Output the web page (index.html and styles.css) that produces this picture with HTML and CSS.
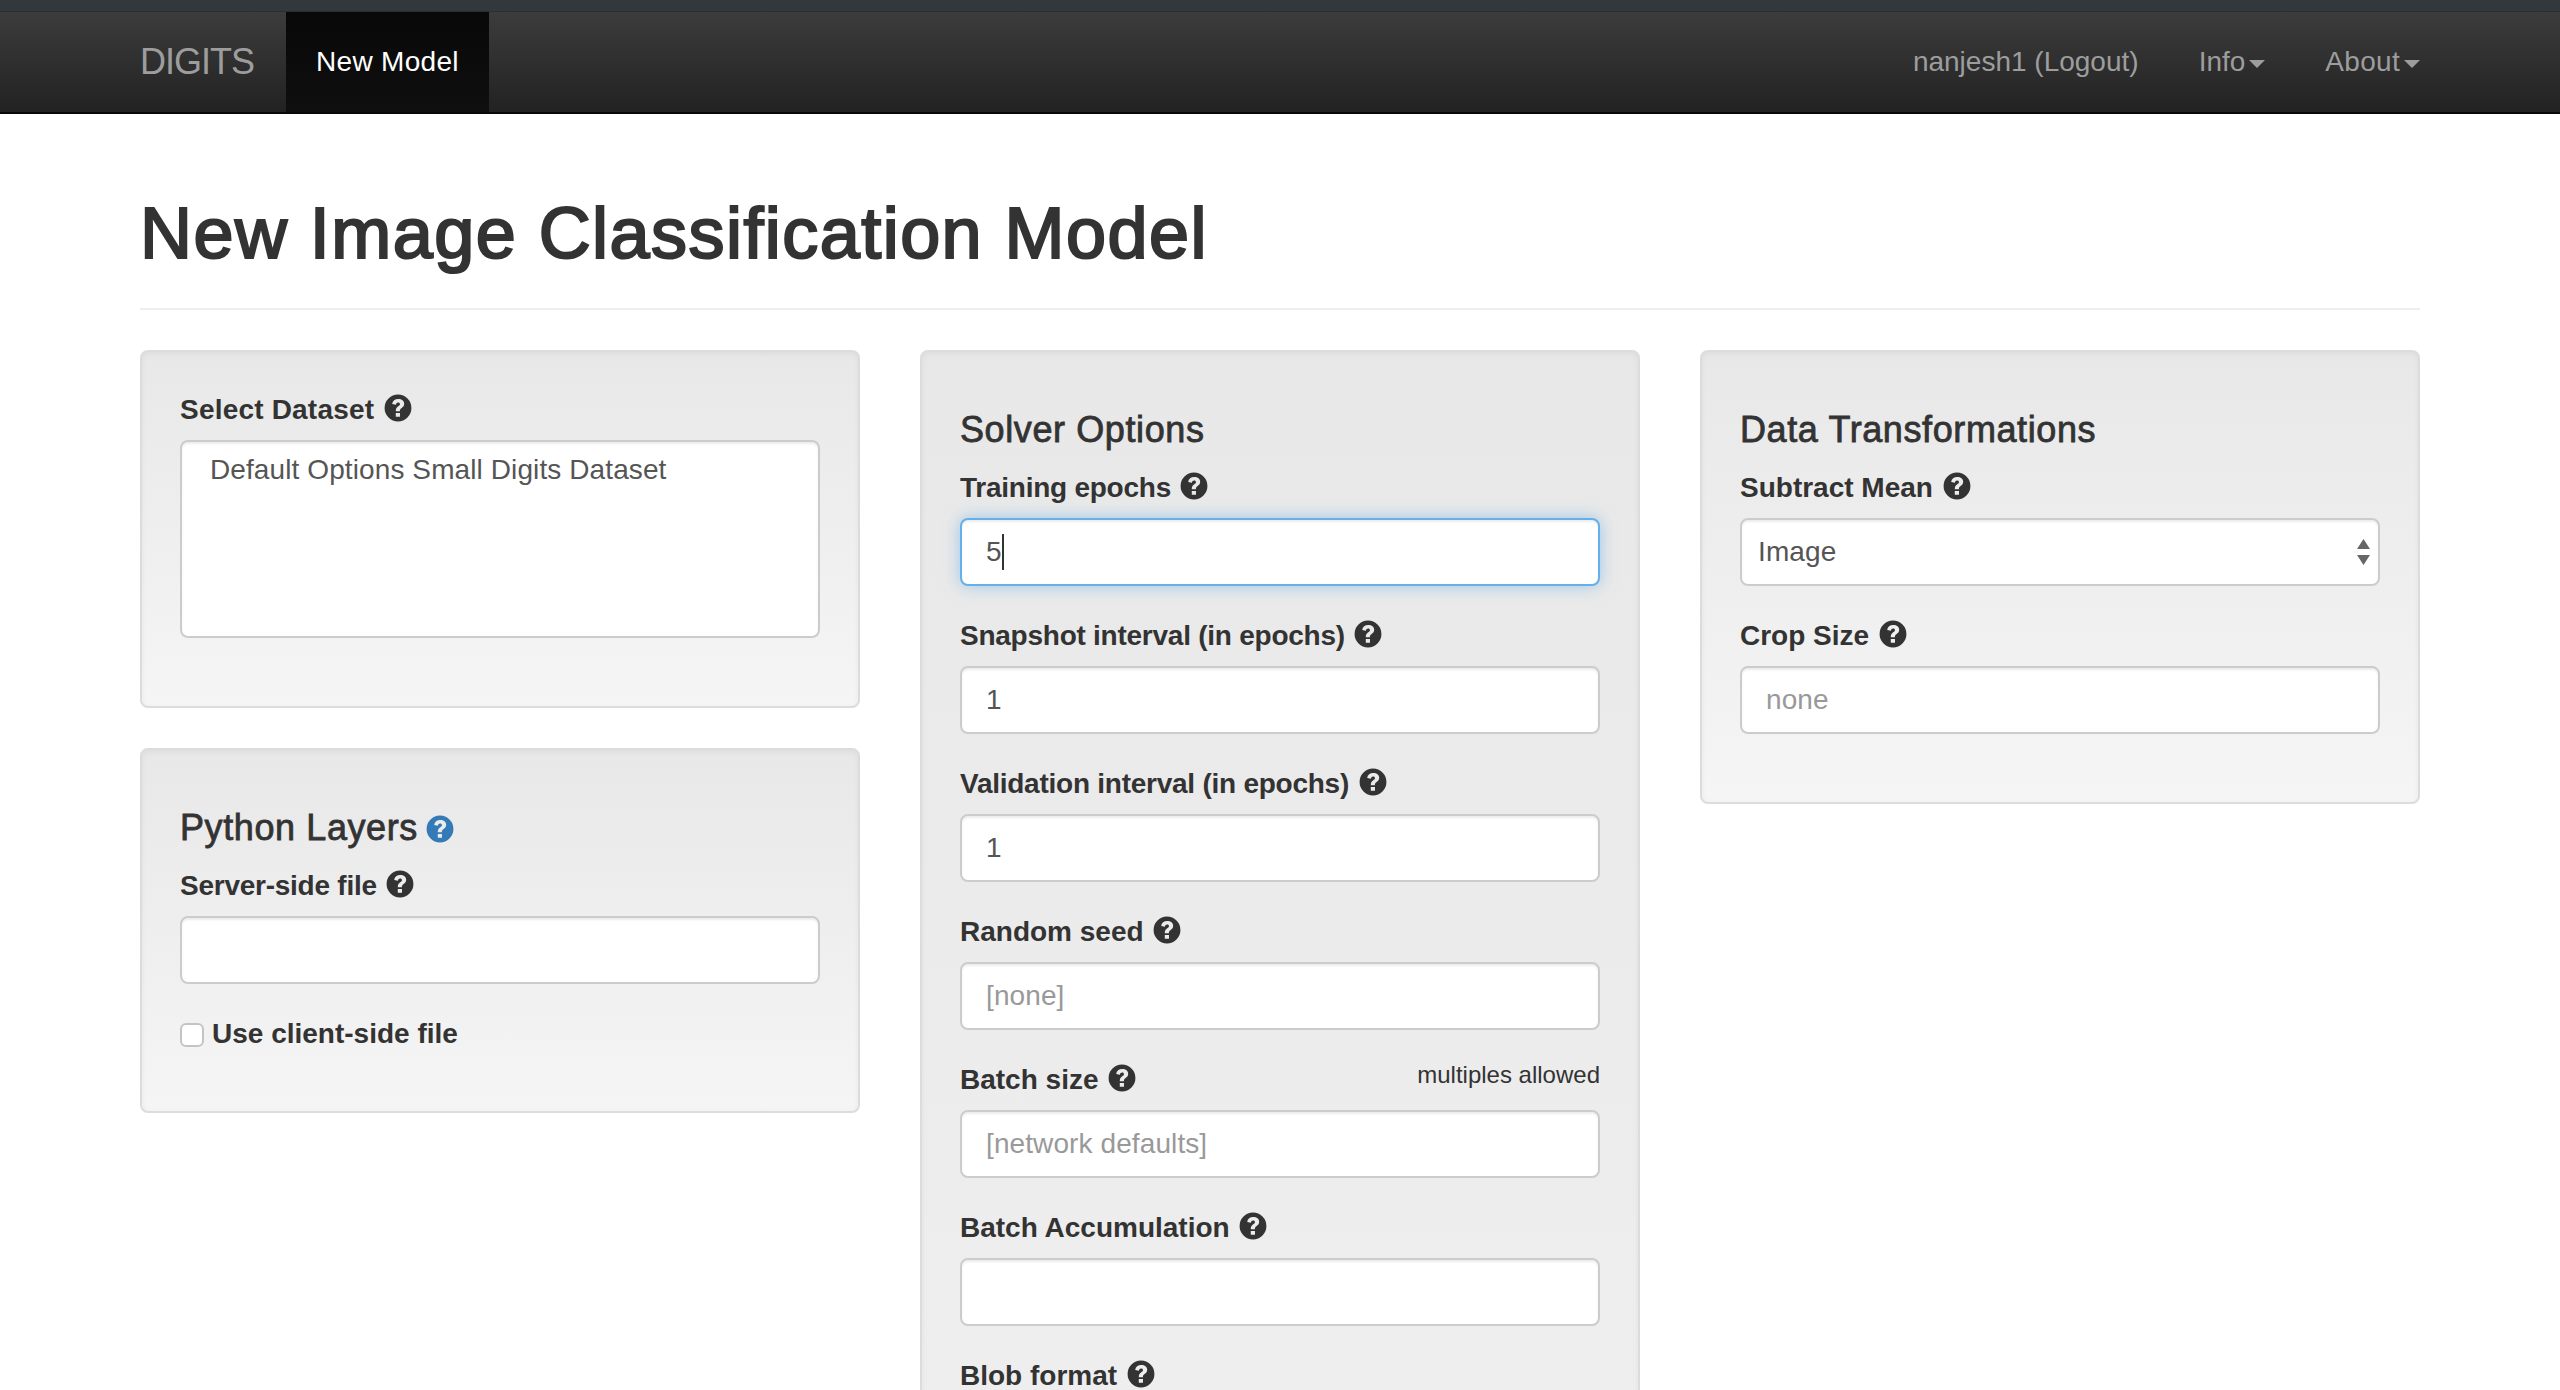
FILE: index.html
```html
<!DOCTYPE html>
<html lang="en">
<head>
    <meta charset="UTF-8">
    <title>New Image Classification Model - DIGITS</title>
    <link rel="stylesheet" href="styles.css">
</head>
<body>
    <svg class="icon-defs" width="0" height="0">
        <symbol id="question-sign" viewBox="0 0 24 24">
            <path fill-rule="evenodd" d="M12 .5a11.5 11.5 0 1 0 0 23 11.5 11.5 0 0 0 0-23zM7 8.6C7.4 5.6 9.4 4.2 12.2 4.2c3 0 5.1 1.6 5.1 4.2 0 1.9-1.1 2.9-2.4 3.8-1 .7-1.3 1.1-1.3 2.6h-3.5c0-2.2.6-3.3 2.1-4.3 1-.7 1.5-1.1 1.5-1.9 0-.9-.6-1.4-1.6-1.4-1.1 0-1.7.7-1.9 2zM10.1 16.2h3.6v3.4h-3.6z"/>
        </symbol>
    </svg>

    <div class="top-strip"></div>
    <nav class="navbar">
        <a class="brand" href="#">DIGITS</a>
        <a class="nav-link active" href="#">New Model</a>
        <div class="nav-right">
            <a class="nav-link" href="#">nanjesh1 (Logout)</a>
            <a class="nav-link" href="#">Info<span class="caret"></span></a>
            <a class="nav-link nav-about" href="#">About<span class="caret"></span></a>
        </div>
    </nav>

    <div class="container">
        <div class="page-header">
            <h1>New Image Classification Model</h1>
        </div>

        <div class="columns">
            <div class="column">
                <div class="well">
                    <div class="form-group">
                        <label class="label-wide">Select Dataset <svg class="help"><use href="#question-sign"/></svg></label>
                        <select class="form-control dataset-list" size="5">
                            <option>Default Options Small Digits Dataset</option>
                        </select>
                    </div>
                </div>
                <div class="well">
                    <h4>Python Layers <svg class="help help-blue"><use href="#question-sign"/></svg></h4>
                    <div class="form-group">
                        <label class="label-tight">Server-side file <svg class="help"><use href="#question-sign"/></svg></label>
                        <input class="form-control" type="text">
                    </div>
                    <div class="checkbox">
                        <label><input type="checkbox"> Use client-side file</label>
                    </div>
                </div>
            </div>

            <div class="column">
                <div class="well well-long">
                    <h4>Solver Options</h4>
                    <div class="form-group">
                        <label class="label-tight">Training epochs <svg class="help"><use href="#question-sign"/></svg></label>
                        <div class="input-wrap">
                            <input class="form-control focused" type="text" value="5">
                            <span class="text-caret"></span>
                        </div>
                    </div>
                    <div class="form-group">
                        <label class="label-tight">Snapshot interval (in epochs) <svg class="help"><use href="#question-sign"/></svg></label>
                        <input class="form-control" type="text" value="1">
                    </div>
                    <div class="form-group">
                        <label class="label-tight">Validation interval (in epochs) <svg class="help"><use href="#question-sign"/></svg></label>
                        <input class="form-control" type="text" value="1">
                    </div>
                    <div class="form-group">
                        <label>Random seed <svg class="help"><use href="#question-sign"/></svg></label>
                        <input class="form-control" type="text" placeholder="[none]">
                    </div>
                    <div class="form-group">
                        <div class="label-row">
                            <label>Batch size <svg class="help"><use href="#question-sign"/></svg></label>
                            <small>multiples allowed</small>
                        </div>
                        <input class="form-control" type="text" placeholder="[network defaults]">
                    </div>
                    <div class="form-group">
                        <label>Batch Accumulation <svg class="help"><use href="#question-sign"/></svg></label>
                        <input class="form-control" type="text">
                    </div>
                    <div class="form-group">
                        <label>Blob format <svg class="help"><use href="#question-sign"/></svg></label>
                    </div>
                </div>
            </div>

            <div class="column">
                <div class="well">
                    <h4>Data Transformations</h4>
                    <div class="form-group">
                        <label>Subtract Mean <svg class="help"><use href="#question-sign"/></svg></label>
                        <div class="input-wrap">
                            <select class="form-control select-box">
                                <option>Image</option>
                            </select>
                            <svg class="select-arrows" viewBox="0 0 13 26"><path d="M6.5 0L13 10H0zM6.5 26L0 16h13z"/></svg>
                        </div>
                    </div>
                    <div class="form-group">
                        <label>Crop Size <svg class="help"><use href="#question-sign"/></svg></label>
                        <input class="form-control" type="text" placeholder="none">
                    </div>
                </div>
            </div>
        </div>
    </div>
</body>
</html>
```

FILE: styles.css
```css
html, body {
    height: 1390px;
    overflow: hidden;
}
body {
    margin: 0;
    font-family: "Liberation Sans", Arial, sans-serif;
    font-size: 28px;
    line-height: 40px;
    color: #333;
    background-color: #fff;
}
.icon-defs {
    display: block;
    height: 0;
}
.top-strip {
    height: 11px;
    background-color: #32383c;
    border-bottom: 1px solid #2b2e30;
}
.navbar {
    display: flex;
    align-items: stretch;
    height: 100px;
    padding: 0 110px;
    background-image: linear-gradient(to bottom, #3c3c3c 0, #222 100%);
    border-bottom: 2px solid #080808;
}
.navbar a {
    text-decoration: none;
    color: #9d9d9d;
}
.brand {
    padding: 0 32px 0 30px;
    font-size: 36px;
    line-height: 100px;
    letter-spacing: -1px;
}
.nav-link {
    padding: 0 30px;
    line-height: 100px;
}
.nav-link.active {
    color: #fff;
    letter-spacing: 0.3px;
    background-image: linear-gradient(to bottom, #080808 0, #0f0f0f 100%);
}
.nav-about {
    letter-spacing: 0.3px;
}
.nav-right {
    display: flex;
    margin-left: auto;
}
.caret {
    display: inline-block;
    width: 0;
    height: 0;
    margin-left: 4px;
    vertical-align: middle;
    border-top: 8px solid #9d9d9d;
    border-left: 8px solid transparent;
    border-right: 8px solid transparent;
}
.container {
    padding: 0 140px;
}
.page-header {
    margin-bottom: 40px;
    padding-top: 80px;
    padding-bottom: 35px;
    border-bottom: 2px solid #eee;
}
h1 {
    margin: 0;
    font-size: 72px;
    line-height: 79px;
    font-weight: normal;
    letter-spacing: 1.45px;
    -webkit-text-stroke: 2.2px #333;
}
.columns {
    display: grid;
    grid-template-columns: repeat(3, 720px);
    gap: 60px;
    align-items: start;
}
.well {
    margin-bottom: 40px;
    padding: 38px;
    background-image: linear-gradient(to bottom, #e8e8e8 0, #f5f5f5 100%);
    border: 2px solid #dcdcdc;
    border-radius: 8px;
    box-shadow: inset 0 2px 6px rgba(0, 0, 0, 0.05);
}
.well-long {
    min-height: 2260px;
    box-sizing: border-box;
}
h4 {
    margin: 20px 0 18px;
    font-size: 36px;
    line-height: 40px;
    font-weight: 500;
    letter-spacing: 0.6px;
    -webkit-text-stroke: 0.8px #333;
}
label {
    display: inline-block;
    margin-bottom: 10px;
    font-weight: bold;
}
.label-tight {
    letter-spacing: -0.25px;
}
.label-wide {
    letter-spacing: 0.2px;
}
.help {
    width: 28px;
    height: 28px;
    margin-left: 2px;
    vertical-align: -3px;
    fill: #333;
}
h4 .help {
    margin-left: -3px;
    -webkit-text-stroke: 0;
}
.help-blue {
    fill: #337ab7;
}
.form-group {
    margin-bottom: 30px;
}
.form-control {
    display: block;
    width: 100%;
    height: 68px;
    box-sizing: border-box;
    padding: 12px 24px;
    font-family: inherit;
    font-size: 28px;
    line-height: 40px;
    letter-spacing: 0.1px;
    color: #555;
    background-color: #fff;
    border: 2px solid #ccc;
    border-radius: 8px;
    box-shadow: inset 0 2px 2px rgba(0, 0, 0, 0.075);
    outline: none;
}
.form-control::placeholder {
    color: #999;
}
.form-control.focused {
    border-color: #66afe9;
    box-shadow: inset 0 2px 2px rgba(0, 0, 0, 0.075), 0 0 16px rgba(102, 175, 233, 0.6);
}
.dataset-list {
    height: 198px;
    overflow: hidden;
}
.dataset-list option {
    padding: 0 4px;
    min-height: 40px;
}
.select-box {
    appearance: none;
    padding-left: 16px;
}
.input-wrap {
    position: relative;
}
.text-caret {
    position: absolute;
    left: 42px;
    top: 16px;
    width: 2px;
    height: 36px;
    background-color: #333;
}
.select-arrows {
    position: absolute;
    right: 10px;
    top: 21px;
    width: 13px;
    height: 26px;
    fill: #666;
}
.label-row {
    display: flex;
    justify-content: space-between;
}
small {
    font-size: 24px;
    line-height: 30px;
}
.checkbox {
    margin: 20px 0 19px;
}
.checkbox label {
    display: flex;
    align-items: center;
    margin: 0;
    gap: 8px;
}
.checkbox input {
    appearance: none;
    box-sizing: border-box;
    width: 24px;
    height: 24px;
    margin: 1px 0 0;
    background-color: #fff;
    border: 2px solid #c4c4c4;
    border-radius: 6px;
}
```
